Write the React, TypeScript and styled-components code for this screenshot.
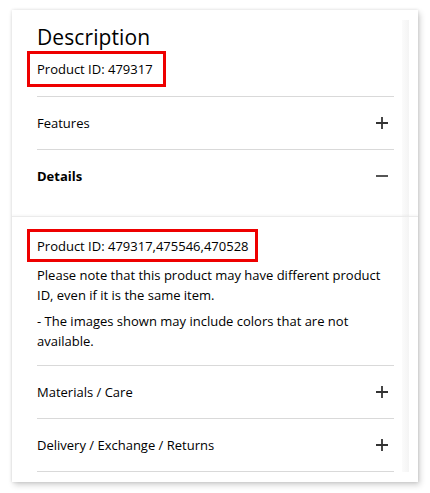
import React, { FC } from "react";
import styled, { createGlobalStyle } from "styled-components";

const GlobalStyle = createGlobalStyle`
  html, body {
    margin: 0;
    padding: 0;
    background: #fff;
  }
  body {
    font-family: "Segoe UI", "Open Sans", "Noto Sans", sans-serif;
    color: #000;
  }
`;

const Page = styled.div`
  width: 430px;
  height: 493px;
  padding: 10px 12px 0 12px;
  box-sizing: border-box;
`;

const Card = styled.div`
  background: #fff;
  box-shadow: 0 0 3px rgba(0, 0, 0, 0.12), 2px 3px 6px rgba(0, 0, 0, 0.18);
  display: flex;
  flex-direction: column;
  height: 472px;
  box-sizing: border-box;
`;

const Section = styled.div<{ $divided?: boolean }>`
  display: flex;
  flex-direction: row;
  padding: ${(p) => (p.$divided ? "0 0 10px 0" : "10px 0 0 0")};
  border-top: ${(p) => (p.$divided ? "1px solid #ebebeb" : "none")};
  box-shadow: ${(p) => (p.$divided ? "0 -1px 2px rgba(0,0,0,0.04)" : "none")};
  flex: ${(p) => (p.$divided ? "1" : "none")};
`;

const Content = styled.div`
  width: 357px;
  margin-left: 25px;
  display: flex;
  flex-direction: column;
`;

const Track = styled.div`
  width: 7px;
  margin-left: 8px;
  background: linear-gradient(to right, #fbfbfb, #f4f4f4);
`;

const Title = styled.h2`
  margin: 0;
  padding-top: 3px;
  font-size: 21px;
  font-weight: 400;
  line-height: 28px;
  height: 28px;
  letter-spacing: 0.1px;
`;

const Highlight = styled.div<{ $width: number; $height: number }>`
  margin-left: -10px;
  width: ${(p) => p.$width}px;
  height: ${(p) => p.$height}px;
  box-sizing: border-box;
  border: 3px solid #ee0000;
  padding: 0 0 0 7px;
  display: flex;
  align-items: center;
  font-size: 13px;
  line-height: 18px;
`;

const Row = styled.div<{ $last?: boolean }>`
  display: flex;
  align-items: center;
  justify-content: space-between;
  height: 52px;
  border-bottom: ${(p) => (p.$last ? "none" : "1px solid #d9d9d9")};
  font-size: 13px;
`;

const RowLabel = styled.span<{ $bold?: boolean }>`
  font-weight: ${(p) => (p.$bold ? 700 : 400)};
`;

const Note = styled.p`
  margin: 0 0 6px 0;
  font-size: 13px;
  line-height: 20px;
`;

const Details = styled.div`
  display: flex;
  flex-direction: column;
  padding-top: 12px;
  padding-bottom: 8px;
  border-bottom: 1px solid #d9d9d9;
`;

const IconBox = styled.span`
  display: flex;
  width: 14px;
  height: 14px;
  margin-right: 5px;
`;

const Spacer = styled.div<{ $h: number; $line?: boolean }>`
  height: ${(p) => p.$h}px;
  flex: none;
  border-bottom: ${(p) => (p.$line ? "1px solid #d9d9d9" : "none")};
`;

const PlusIcon: FC = () => (
  <IconBox>
    <svg width="14" height="14" viewBox="0 0 14 14">
      <path d="M7 1v12M1 7h12" stroke="#333" strokeWidth="1.8" />
    </svg>
  </IconBox>
);

const MinusIcon: FC = () => (
  <IconBox>
    <svg width="14" height="14" viewBox="0 0 14 14">
      <path d="M1 7h12" stroke="#555" strokeWidth="2" />
    </svg>
  </IconBox>
);

interface AccordionRowProps {
  label: string;
  open?: boolean;
  bold?: boolean;
  last?: boolean;
}

const AccordionRow: FC<AccordionRowProps> = ({ label, open, bold, last }) => (
  <Row $last={last}>
    <RowLabel $bold={bold}>{label}</RowLabel>
    {open ? <MinusIcon /> : <PlusIcon />}
  </Row>
);

const App: FC = () => {
  return (
    <>
      <GlobalStyle />
      <Page>
        <Card>
          <Section>
            <Content>
              <Title>Description</Title>
              <Highlight $width={139} $height={36}>
                Product ID: 479317
              </Highlight>
              <Spacer $h={9} $line />
              <AccordionRow label="Features" />
              <AccordionRow label="Details" bold open last />
              <Spacer $h={14} />
            </Content>
            <Track />
          </Section>
          <Section $divided>
            <Content>
              <Details>
                <Highlight $width={231} $height={33}>
                  Product ID: 479317,475546,470528
                </Highlight>
                <Spacer $h={3} />
                <Note>
                  Please note that this product may have different product ID,
                  even if it is the same item.
                </Note>
                <Note>
                  - The images shown may include colors that are not available.
                </Note>
              </Details>
              <AccordionRow label="Materials / Care" />
              <AccordionRow label="Delivery / Exchange / Returns" />
            </Content>
            <Track />
          </Section>
        </Card>
      </Page>
    </>
  );
};

export default App;
